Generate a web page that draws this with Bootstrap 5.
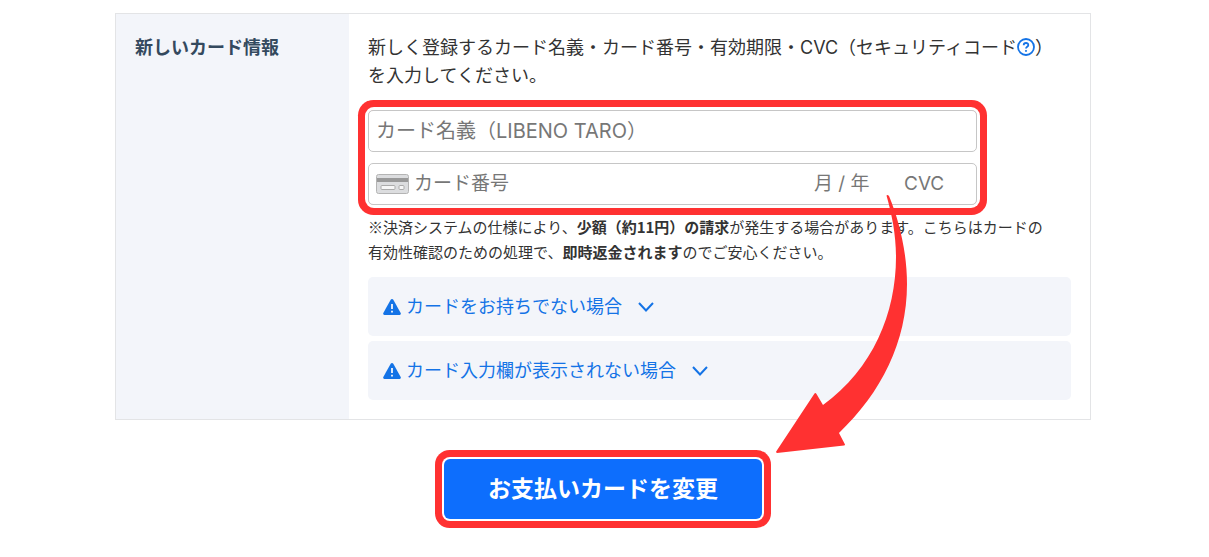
<!DOCTYPE html>
<html lang="ja">
<head>
<meta charset="utf-8">
<meta name="viewport" content="width=device-width, initial-scale=1">
<title>お支払いカードの変更</title>
<link href="https://cdn.jsdelivr.net/npm/bootstrap@5.3.0/dist/css/bootstrap.min.css" rel="stylesheet">
<style>
  body { font-family: Inter, "Noto Sans CJK JP", sans-serif; font-size: 18px; line-height: 28px; color: #333; background: #fff; }
  .page { padding: 13px 118px 37px 115px; }
  .panel { border: 1px solid #e3e4e6; }
  .panel-head { flex: 0 0 233px; padding: 20px 19px; background: #f3f5fa; }
  .panel-head h2 { font-size: 18px; line-height: 28px; color: #34495e; }
  .panel-body { padding: 20px 19px 19px; min-width: 0; }
  .help-link svg { display: block; }
  .marked { box-shadow: 0 0 0 2px #fff, 0 0 0 9px #ff3131; }
  .card-fields { width: 609px; max-width: 100%; margin-top: 20px; border-radius: 6px; gap: 11px; }
  .card-fields.marked { box-shadow: 0 0 0 3px #fff, 0 0 0 10px #ff3131; }
  .field { height: 42px; border: 1px solid #c6c6c6; border-radius: 5px; font-size: 19px; line-height: 28px; color: #333; background: #fff; padding: 0 7px; }
  .field-name { font-size: 20px; }
  .field input { border: 0; outline: 0; padding: 0; background: transparent; color: inherit; }
  .field::placeholder, .field input::placeholder { color: #777; opacity: 1; }
  .field-icon { margin-right: 5px; }
  .field-number { min-width: 0; }
  .field-expiry { width: 90px; }
  .field-cvc { width: 65px; }
  .note { font-family: "Noto Sans CJK JP", sans-serif; font-size: 15px; line-height: 25px; margin: 9px 0 13px; }
  .help-list { gap: 5px; }
  .help-row { height: 59px; padding: 0 15px; border: 0; border-radius: 5px; background: #f3f5fa; color: #1473e6; gap: 5px; }
  .help-row .chevron { margin-left: 11px; }
  .submit-row { margin-top: 39px; }
  .submit-button { width: 318px; height: 60px; border-radius: 6px; font-size: 23px; background: #0d6efd; }
  .arrow { left: 660px; top: 180px; }
</style>
</head>
<body>
<main class="page">
  <form class="position-relative">
    <section class="panel d-flex">
      <div class="panel-head">
        <h2 class="fw-bold m-0">新しいカード情報</h2>
      </div>
      <div class="panel-body flex-grow-1">
        <p class="m-0">新しく登録するカード名義・カード番号・有効期限・CVC（セキュリティコード<a href="#" class="help-link d-inline-block align-text-bottom" aria-label="セキュリティコードとは"><svg width="18" height="20" viewBox="0 0 18 20" fill="none" stroke="#1473e6"><circle cx="9" cy="9" r="8" stroke-width="1.8"/><path d="M6.7 7.2C6.7 4.2 11.4 4.3 11.3 7.1C11.2 8.8 9 8.7 9 10.6" stroke-width="1.8"/><circle cx="9" cy="12.9" r=".6" fill="#1473e6"/></svg></a>）<br>を入力してください。</p>

        <div class="card-fields marked d-flex flex-column">
          <input class="field field-name w-100" type="text" placeholder="カード名義（LIBENO TARO）" aria-label="カード名義">
          <div class="field d-flex align-items-center">
            <svg class="field-icon flex-shrink-0" width="33" height="20" viewBox="0 0 33 20" aria-hidden="true">
              <rect x=".5" y=".5" width="32" height="19" rx="2" fill="#dcdddf" stroke="#b4b4b4"/>
              <rect x="1" y="4" width="31" height="4" fill="#999"/>
              <rect x="5" y="11.500" width="14" height="4" rx="1" fill="#f7f7f7" stroke="#aaa"/>
              <rect x="23" y="11.500" width="5" height="4" rx="1" fill="#f7f7f7" stroke="#aaa"/>
            </svg>
            <input class="field-number flex-grow-1" type="text" placeholder="カード番号" aria-label="カード番号">
            <input class="field-expiry" type="text" placeholder="月 / 年" aria-label="有効期限">
            <input class="field-cvc" type="text" placeholder="CVC" aria-label="CVC">
          </div>
        </div>

        <p class="note">※決済システムの仕様により、<b>少額（約11円）の請求</b>が発生する場合があります。こちらはカードの<br>有効性確認のための処理で、<b>即時返金されます</b>のでご安心ください。</p>

        <div class="help-list d-grid">
          <button type="button" class="help-row d-flex align-items-center">
            <svg width="18" height="16" viewBox="0 0 18 16" aria-hidden="true"><path d="M9 0Q9.800 0 10.300 .8L17.700 14Q18.300 15.800 16.700 16H1.300Q-.3 15.800 .3 14L7.700 .8Q8.200 0 9 0Z" fill="#1473e6"/><path d="M9 5V10M9 11.800V13.600" stroke="#f3f5fa" stroke-width="1.800"/></svg>
            <span>カードをお持ちでない場合</span>
            <svg class="chevron" width="16" height="10" viewBox="0 0 16 10" fill="none" stroke="#1473e6" stroke-width="2" aria-hidden="true"><path d="M1 1L8 8.500L15 1"/></svg>
          </button>
          <button type="button" class="help-row d-flex align-items-center">
            <svg width="18" height="16" viewBox="0 0 18 16" aria-hidden="true"><path d="M9 0Q9.800 0 10.300 .8L17.700 14Q18.300 15.800 16.700 16H1.300Q-.3 15.800 .3 14L7.700 .8Q8.200 0 9 0Z" fill="#1473e6"/><path d="M9 5V10M9 11.800V13.600" stroke="#f3f5fa" stroke-width="1.800"/></svg>
            <span>カード入力欄が表示されない場合</span>
            <svg class="chevron" width="16" height="10" viewBox="0 0 16 10" fill="none" stroke="#1473e6" stroke-width="2" aria-hidden="true"><path d="M1 1L8 8.500L15 1"/></svg>
          </button>
        </div>
      </div>
    </section>

    <div class="submit-row d-flex justify-content-center">
      <button type="submit" class="submit-button marked btn btn-primary border-0 fw-bold">お支払いカードを変更</button>
    </div>

    <!-- Arrow from the card fields to the submit button -->
    <svg class="arrow position-absolute pe-none" width="135" height="262" viewBox="775 193 135 262" fill="#ff3131" aria-hidden="true">
      <path d="M886.500 195.500Q887.500 194.500 889 196C899 220 907 252 907 284C907 342 881 393 839 433L845 444.500Q845 445.500 844 445.500L777 453Q775.500 452.500 776.500 451L814.500 393.500Q815.500 392.500 816.500 394L823 405C873 369 896 313 896 257C896 235 892 215 886.500 195.500Z"/>
    </svg>
  </form>
</main>
<script src="https://cdn.jsdelivr.net/npm/bootstrap@5.3.0/dist/js/bootstrap.bundle.min.js"></script>
</body>
</html>
